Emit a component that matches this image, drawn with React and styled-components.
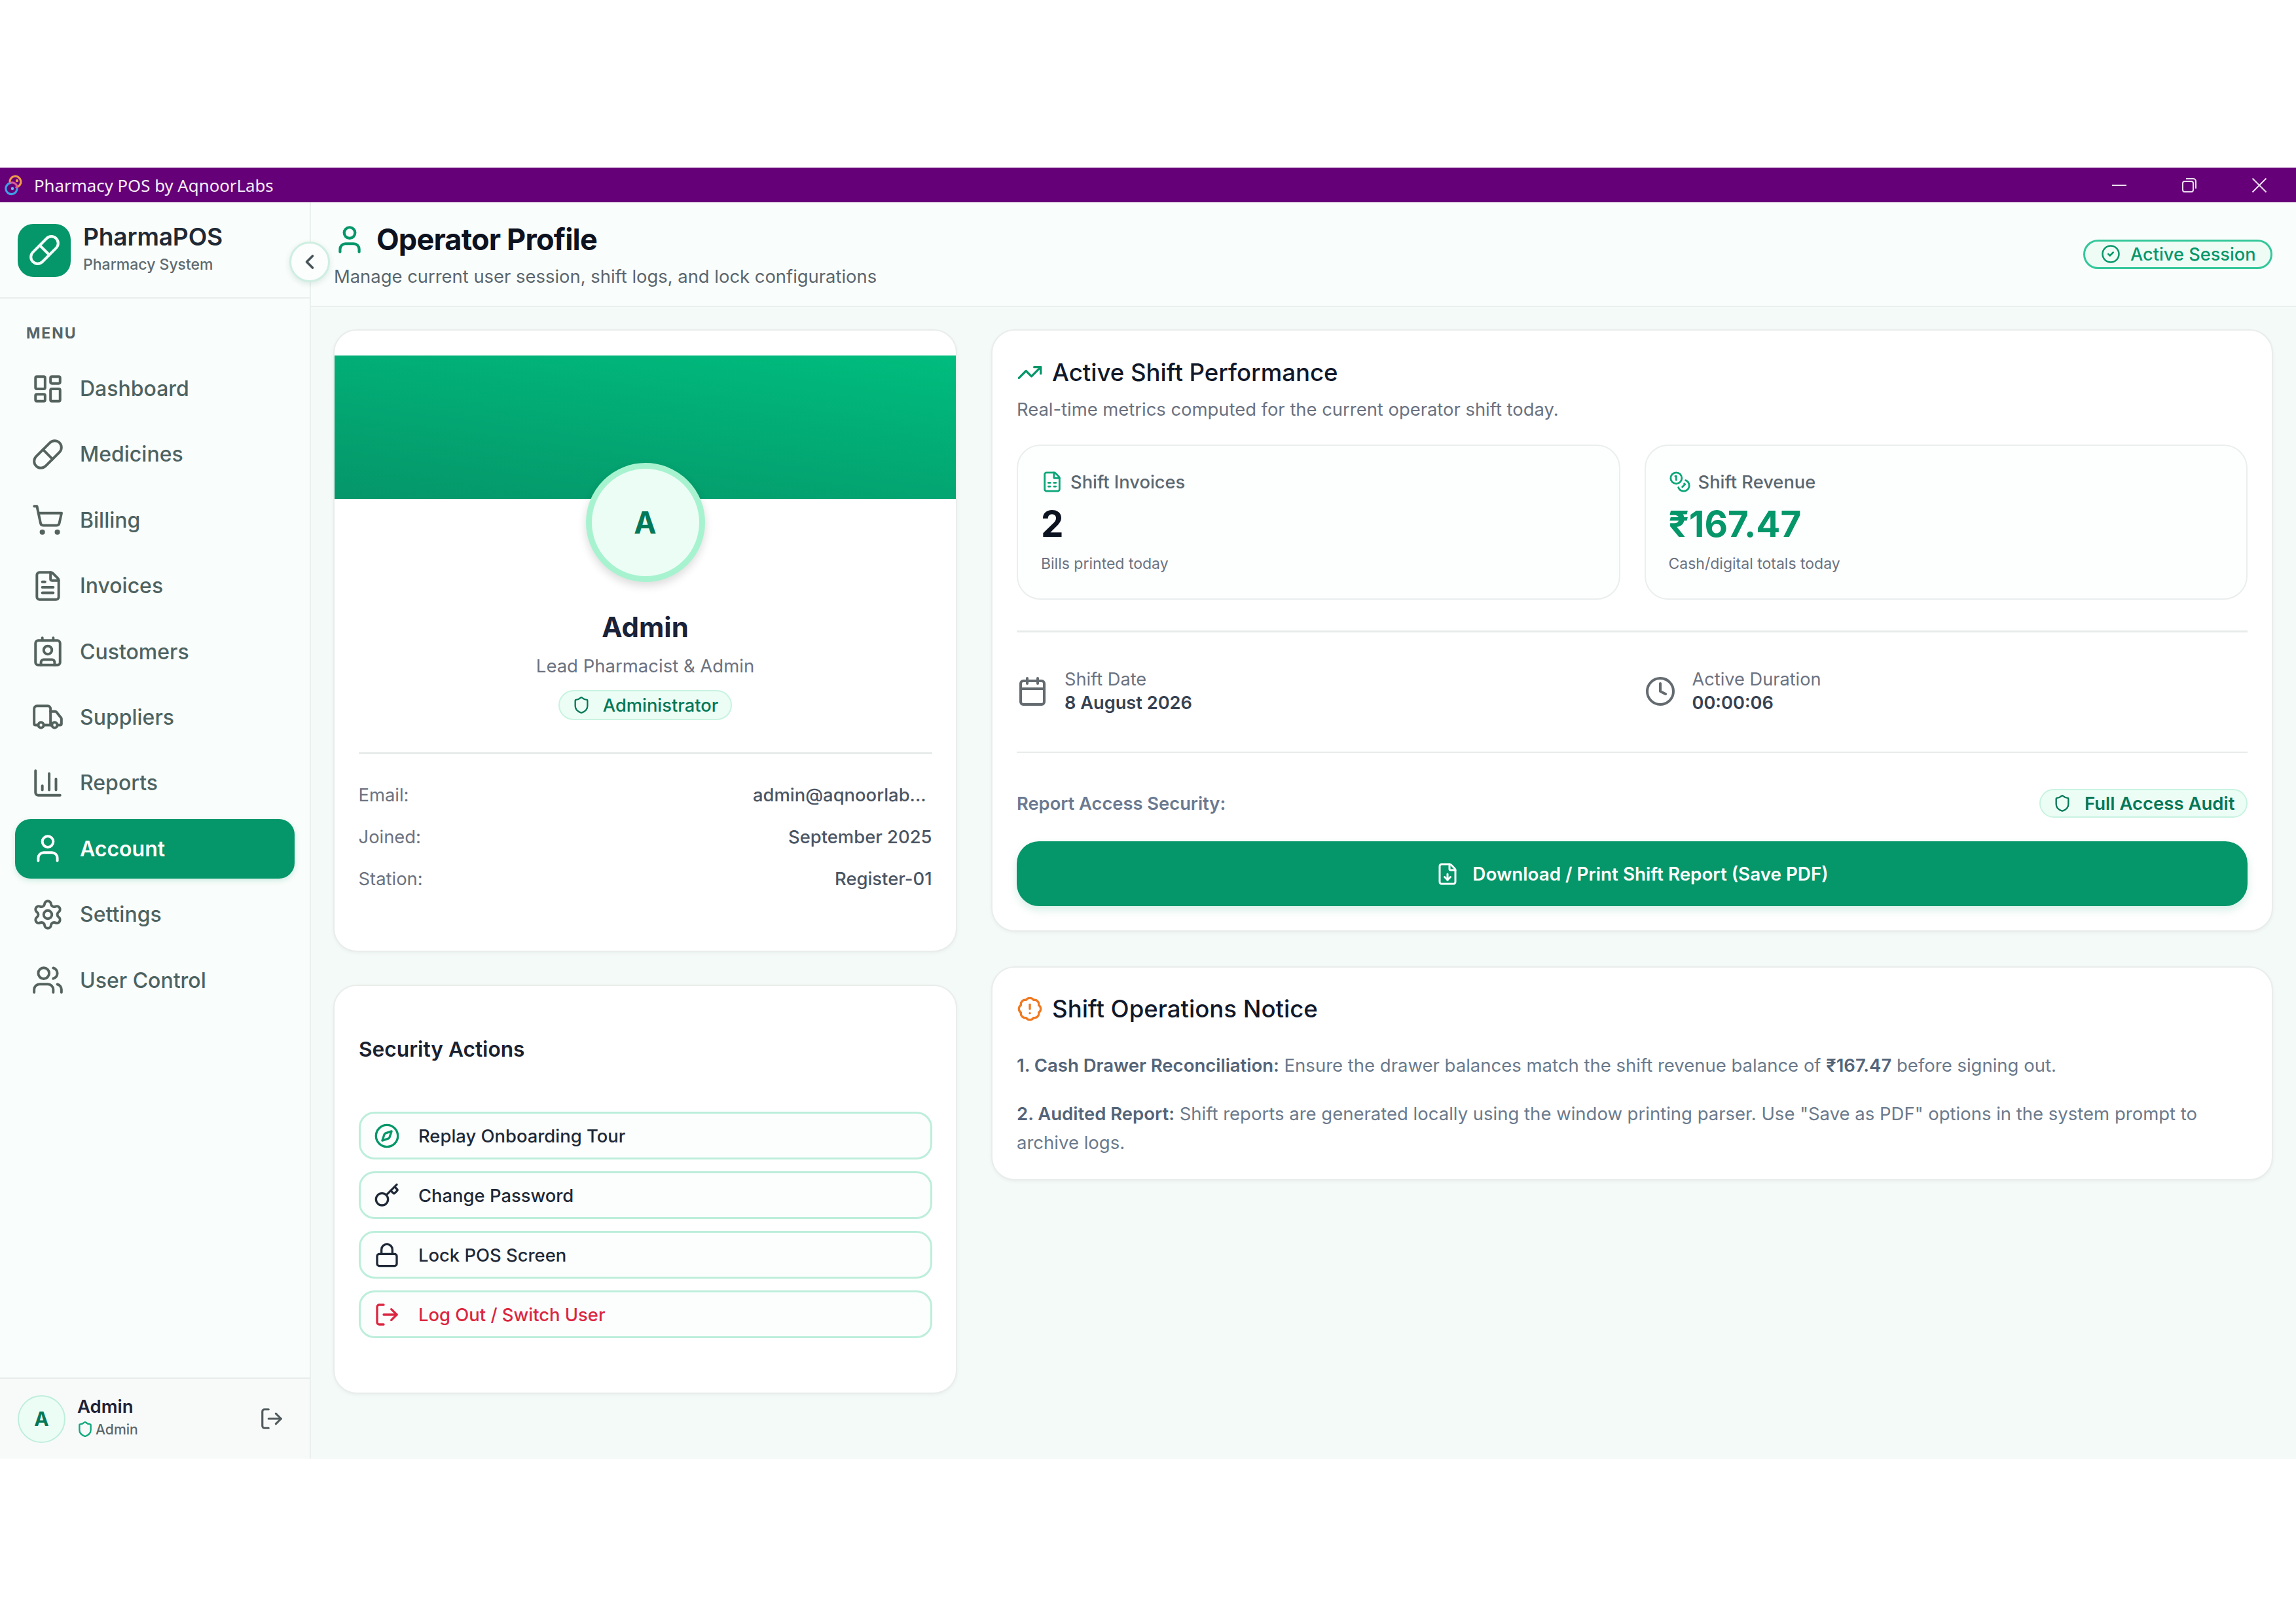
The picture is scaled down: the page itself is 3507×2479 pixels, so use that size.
import React from "react";
import styled, { createGlobalStyle } from "styled-components";
import {
  LayoutDashboard, Pill, ShoppingCart, FileText, Contact, Truck, ChartColumn, User, Settings, Users,
  ChevronLeft, LogOut, CircleCheck, Shield, TrendingUp, FileSpreadsheet, Coins, Calendar, Clock,
  FileDown, Compass, Key, Lock, BadgeAlert,
} from "lucide-react";

const Global = createGlobalStyle`
  html, body { margin: 0; padding: 0; background: #fff; }
  * { box-sizing: border-box; }
  body { font-family: Inter, "Noto Sans", "Liberation Sans", sans-serif; -webkit-font-smoothing: antialiased; }
`;

const Page = styled.div`
  width: 3507px; height: 2479px; padding-top: 256px; background: #fff;
`;
const Window = styled.div`
  height: 1972px; display: flex; flex-direction: column; background: #f4faf7;
`;
const TitleBar = styled.header`
  height: 53px; flex: none; display: flex; align-items: center; background: #660078; padding: 0 3px 0 7px; color: #fff;
`;
const TitleText = styled.span`
  margin-left: 15px; font-family: "Noto Sans", Inter, sans-serif; font-size: 25.8px; flex: 1; color: #f7eefa;
`;
const WinButton = styled.span`
  width: 107px; display: flex; align-items: center; justify-content: center; color: #ece0f0;
`;
const Body = styled.div`
  flex: 1; display: flex; min-height: 0;
`;
const Sidebar = styled.aside`
  width: 475px; flex: none; position: relative; display: flex; flex-direction: column;
  background: #f9fdfb; border-right: 2px solid #eaf0ed;
`;
const Brand = styled.div`
  height: 147px; flex: none; display: flex; align-items: center; gap: 19px; padding: 0 0 0 27px; border-bottom: 2px solid #eaeeec;
`;
const BrandMark = styled.div`
  width: 81px; height: 81px; border-radius: 24px; background: #059669; color: #f2fff9;
  display: flex; align-items: center; justify-content: center; margin-top: 1px;
`;
const BrandText = styled.div`
  display: flex; flex-direction: column; gap: 4px; margin-top: -6px;
`;
const BrandName = styled.div`
  font-size: 37.2px; font-weight: 600; line-height: 46px; color: #1f2a37; letter-spacing: -0.2px;
`;
const BrandSub = styled.div`
  font-size: 23px; font-weight: 500; line-height: 30px; color: #5f6b70;
`;
const CollapseButton = styled.button`
  position: absolute; right: -31px; top: 60px; width: 62px; height: 62px; border-radius: 50%; padding: 0;
  background: #fbfefd; border: 3px solid #cfeee2; color: #46545a; display: flex; align-items: center; justify-content: center;
  box-shadow: 0 3px 8px rgba(16, 90, 70, 0.12); z-index: 3;
`;
const MenuLabel = styled.div`
  margin: 38px 0 24px 40px; font-size: 23px; line-height: 30px; font-weight: 700; letter-spacing: 1.9px; color: #56656a;
`;
const Nav = styled.nav`
  display: flex; flex-direction: column; gap: 9.4px; padding: 0 23px;
`;
const NavItem = styled.div`
  height: 91px; display: flex; align-items: center; gap: 24px; padding-left: 25px; border-radius: 24px;
  font-size: 32px; font-weight: ${(p) => (p.$active ? 600 : 500)};
  color: ${(p) => (p.$active ? "#fff" : "#4e6362")};
  background: ${(p) => (p.$active ? "#059669" : "transparent")};
  box-shadow: ${(p) => (p.$active ? "0 3px 8px rgba(5,150,105,0.18)" : "none")};
  svg { color: ${(p) => (p.$active ? "#fff" : "#55635f")}; flex: none; }
`;
const SideFooter = styled.div`
  margin-top: auto; height: 124px; flex: none; display: flex; align-items: center; padding: 0 39px 0 27px;
  background: #f7faf9; border-top: 2px solid #e8edeb;
`;
const SmallAvatar = styled.div`
  width: 73px; height: 73px; border-radius: 50%; background: #ecfdf5; border: 2px solid #bfeedd;
  display: flex; align-items: center; justify-content: center; font-size: 30px; font-weight: 700; color: #047857;
`;
const FootText = styled.div`
  margin: -6px 0 0 18px; flex: 1; display: flex; flex-direction: column; gap: 2px;
`;
const FootName = styled.div`
  font-size: 27.5px; line-height: 36px; font-weight: 600; color: #1e2238;
`;
const FootRole = styled.div`
  display: flex; align-items: center; gap: 3px; font-size: 21.2px; line-height: 30px; font-weight: 500; color: #5c676c;
  svg { color: #10a97d; margin-left: -1px; }
`;
const FootLogout = styled.span`
  color: #525c5f; display: flex;
`;
const Main = styled.main`
  flex: 1; min-width: 0; display: flex; flex-direction: column;
`;
const TopBar = styled.div`
  height: 160px; flex: none; display: flex; align-items: center; justify-content: space-between; padding: 0 36px 0 34px;
  background: #f9fdfb; border-bottom: 2px solid #e9efec;
`;
const Heading = styled.div`
  display: flex; flex-direction: column; gap: 8px; padding-top: 4px;
`;
const HeadingRow = styled.div`
  display: flex; align-items: center; gap: 16px; svg { color: #059669; }
`;
const PageTitle = styled.h1`
  margin: 0; font-size: 45px; line-height: 56px; font-weight: 700; letter-spacing: -0.8px; color: #0d1220;
`;
const PageSub = styled.p`
  margin: 0 0 0 1px; font-size: 27.4px; line-height: 40px; color: #5b666e;
`;
const SessionPill = styled.div`
  height: 45px; width: 289px; display: flex; align-items: center; gap: 15px; padding-left: 24px; border-radius: 23px;
  border: 3px solid #34c79a; background: #effcf6; color: #079669; font-size: 27.2px; font-weight: 500;
`;
const Content = styled.div`
  flex: 1; min-height: 0; display: grid; grid-template-columns: 953px 1958px; column-gap: 52px; padding: 34px 0 0 34px; align-items: start;
`;
const Column = styled.div`
  display: flex; flex-direction: column;
  gap: ${(p) => p.$gap}px;
`;
const Card = styled.section`
  background: #fff; border: 2px solid #e9edeb; border-radius: 36px; box-shadow: 0 2px 5px rgba(20, 60, 50, 0.05); overflow: hidden;
`;
const ProfileCard = styled(Card)`
  height: 951px; padding-top: 38px; display: flex; flex-direction: column; align-items: center;
`;
const Banner = styled.div`
  width: 100%; height: 219px; flex: none; background: linear-gradient(188deg, #00bd7e 0%, #059669 100%);
`;
const BigAvatar = styled.div`
  width: 182px; height: 182px; margin-top: -55px; flex: none; border-radius: 50%; background: #ecfdf5; border: 9px solid #a7f3d0;
  display: flex; align-items: center; justify-content: center; font-size: 46px; font-weight: 700; color: #047857;
  box-shadow: 0 6px 14px rgba(0, 0, 0, 0.14);
`;
const ProfileName = styled.h2`
  margin: 44px 0 0; font-size: 42px; line-height: 50px; font-weight: 700; color: #1a2238;
`;
const ProfileRole = styled.div`
  margin-top: 14px; font-size: 27.5px; line-height: 40px; color: #6b7280;
`;
const RoleBadge = styled.div`
  margin-top: 17px; height: 46px; display: inline-flex; align-items: center; gap: 19px; padding: 0 19px 0 19px;
  border-radius: 23px; background: #ecfdf5; border: 2px solid #c8f3e1; color: #047857; font-size: 27.3px; font-weight: 500;
`;
const FullDivider = styled.hr`
  width: ${(p) => p.$w || "100%"}; margin: ${(p) => p.$m || "0"}; border: 0; height: ${(p) => p.$h || 3}px; background: #e7ebea; flex: none;
`;
const InfoRows = styled.div`
  width: 876px; margin-top: 42px; display: flex; flex-direction: column; gap: 24px;
`;
const InfoRow = styled.div`
  height: 40px; display: flex; align-items: center; justify-content: space-between; font-size: 27.4px;
`;
const InfoLabel = styled.span`
  color: #6b7280;
`;
const InfoValue = styled.span`
  color: #4b5563; font-weight: 500; margin-right: ${(p) => p.$inset || 0}px;
`;
const SecurityCard = styled(Card)`
  height: 625px; padding: 75px 36px 0 37px;
`;
const CardTitle = styled.h3`
  margin: 0; font-size: 31.7px; line-height: 44px; font-weight: 600; color: #1a2230;
`;
const ActionList = styled.div`
  margin-top: 73px; display: flex; flex-direction: column; gap: 18px;
`;
const Action = styled.div`
  height: 73px; display: flex; align-items: center; gap: 28px; padding-left: 20px; border-radius: 24px;
  border: 3px solid #bdeedb; background: #fbfefd; font-size: 27.4px; font-weight: 500;
  color: ${(p) => (p.$danger ? "#dc2640" : "#1f2937")};
  svg { color: ${(p) => p.$icon || "currentColor"}; flex: none; }
`;
const ShiftCard = styled(Card)`
  height: 920px; padding: 39px 37px 0;
`;
const SectionHead = styled.div`
  height: 50px; display: flex; align-items: center; gap: 14px; font-size: 36.6px; font-weight: 500; color: #11182a;
  svg { color: ${(p) => p.$icon}; flex: none; }
`;
const SectionSub = styled.p`
  margin: 11px 0 0; font-size: 27.4px; line-height: 40px; color: #6b7280;
`;
const StatGrid = styled.div`
  margin-top: 34px; display: grid; grid-template-columns: 1fr 1fr; column-gap: 37px;
`;
const StatCard = styled.div`
  height: 237px; padding: 37px 35px 0; border: 2px solid #eaeeed; border-radius: 36px; background: #fdfefe;
`;
const StatHead = styled.div`
  height: 36px; display: flex; align-items: center; gap: 11px; font-size: 27.3px; font-weight: 500; color: #5b6770;
  svg { color: #0ba678; flex: none; }
`;
const StatValue = styled.div`
  margin-top: 11px; font-size: 54.8px; line-height: 70px; font-weight: 700; color: ${(p) => p.$color};
`;
const StatNote = styled.div`
  margin-top: 8px; font-size: 23px; line-height: 36px; color: #6b7280;
`;
const MetaGrid = styled.div`
  margin-top: 54px; height: 72px; display: grid; grid-template-columns: 1fr 1fr; column-gap: 37px;
`;
const Meta = styled.div`
  display: flex; align-items: center; gap: 25px;
  svg { color: #646b70; flex: none; }
`;
const MetaText = styled.div`
  display: flex; flex-direction: column;
`;
const MetaLabel = styled.div`
  font-size: 27.2px; line-height: 36px; color: #6b7280;
`;
const MetaValue = styled.div`
  font-size: 27.2px; line-height: 36px; font-weight: 600; color: #374151;
`;
const AccessRow = styled.div`
  margin-top: 54px; height: 46px; display: flex; align-items: center; justify-content: space-between;
`;
const AccessLabel = styled.span`
  font-size: 27.3px; font-weight: 600; color: #6b7a90;
`;
const AccessBadge = styled.div`
  width: 318px; height: 44px; display: flex; align-items: center; gap: 20px; padding-left: 19px; border-radius: 22px;
  background: #ecfdf5; border: 2px solid #c8f3e1; color: #047857; font-size: 27.5px; font-weight: 600;
`;
const DownloadButton = styled.button`
  margin-top: 35px; width: 100%; height: 99px; border: 0; border-radius: 34px; background: #059669; color: #fff;
  display: flex; align-items: center; justify-content: center; gap: 20px;
  font-family: inherit; font-size: 27.8px; font-weight: 600; box-shadow: 0 6px 14px rgba(5, 150, 105, 0.16);
`;
const NoticeCard = styled(Card)`
  height: 327px; padding: 38px 37px 0;
`;
const NoticeText = styled.p`
  margin: ${(p) => p.$top}px 0 0; font-size: 27.5px; line-height: 44px; color: #6b7a8c;
  strong { font-weight: 600; color: #546478; }
`;

const navItems = [
  ["Dashboard", LayoutDashboard],
  ["Medicines", Pill],
  ["Billing", ShoppingCart],
  ["Invoices", FileText],
  ["Customers", Contact],
  ["Suppliers", Truck],
  ["Reports", ChartColumn],
  ["Account", User, true],
  ["Settings", Settings],
  ["User Control", Users],
];

const AppLogo = () => (
  <svg width="30" height="34" viewBox="0 0 30 34" fill="none" strokeWidth="3.2" strokeLinecap="round">
    <path d="M8 13 A8.5 8.5 0 1 1 18 20" stroke="#ef9a4b" />
    <path d="M19 21 A8.6 8.6 0 1 1 9 13.5" stroke="#3f9fe6" />
    <path d="M10 13 C14 12 19 15 19 20" stroke="#d95a9a" />
    <circle cx="19" cy="10" r="2.2" fill="#ef9a4b" />
    <circle cx="12" cy="22" r="2.2" fill="#6fb8f0" />
  </svg>
);
const MinIcon = () => (
  <svg width="24" height="24" viewBox="0 0 24 24" stroke="currentColor" strokeWidth="2"><path d="M1 12h22" /></svg>
);
const RestoreIcon = () => (
  <svg width="24" height="24" viewBox="0 0 24 24" fill="none" stroke="currentColor" strokeWidth="2">
    <rect x="2" y="6" width="16" height="16" rx="3" />
    <path d="M7 2h11a4 4 0 0 1 4 4v11" />
  </svg>
);
const CloseIcon = () => (
  <svg width="24" height="24" viewBox="0 0 24 24" stroke="currentColor" strokeWidth="2"><path d="M1.5 1.5l21 21M22.5 1.5l-21 21" /></svg>
);

export default function App() {
  return (
    <Page>
      <Global />
      <Window>
        <TitleBar>
          <AppLogo />
          <TitleText>Pharmacy POS by AqnoorLabs</TitleText>
          <WinButton><MinIcon /></WinButton>
          <WinButton><RestoreIcon /></WinButton>
          <WinButton><CloseIcon /></WinButton>
        </TitleBar>
        <Body>
          <Sidebar>
            <Brand>
              <BrandMark><Pill size={50} strokeWidth={2} /></BrandMark>
              <BrandText>
                <BrandName>PharmaPOS</BrandName>
                <BrandSub>Pharmacy System</BrandSub>
              </BrandText>
            </Brand>
            <CollapseButton><ChevronLeft size={36} strokeWidth={2.4} /></CollapseButton>
            <MenuLabel>MENU</MenuLabel>
            <Nav>
              {navItems.map(([label, Icon, active]) => (
                <NavItem key={label} $active={active}>
                  <Icon size={50} strokeWidth={1.9} />
                  {label}
                </NavItem>
              ))}
            </Nav>
            <SideFooter>
              <SmallAvatar>A</SmallAvatar>
              <FootText>
                <FootName>Admin</FootName>
                <FootRole><Shield size={26} strokeWidth={2.2} />Admin</FootRole>
              </FootText>
              <FootLogout><LogOut size={38} strokeWidth={2} /></FootLogout>
            </SideFooter>
          </Sidebar>
          <Main>
            <TopBar>
              <Heading>
                <HeadingRow>
                  <User size={50} strokeWidth={2} />
                  <PageTitle>Operator Profile</PageTitle>
                </HeadingRow>
                <PageSub>Manage current user session, shift logs, and lock configurations</PageSub>
              </Heading>
              <SessionPill><CircleCheck size={30} strokeWidth={2} />Active Session</SessionPill>
            </TopBar>
            <Content>
              <Column $gap={50}>
                <ProfileCard>
                  <Banner />
                  <BigAvatar>A</BigAvatar>
                  <ProfileName>Admin</ProfileName>
                  <ProfileRole>Lead Pharmacist &amp; Admin</ProfileRole>
                  <RoleBadge><Shield size={28} strokeWidth={2} />Administrator</RoleBadge>
                  <FullDivider $w="876px" $m="49px 0 0" />
                  <InfoRows>
                    <InfoRow><InfoLabel>Email:</InfoLabel><InfoValue $inset={9}>admin@aqnoorlab...</InfoValue></InfoRow>
                    <InfoRow><InfoLabel>Joined:</InfoLabel><InfoValue>September 2025</InfoValue></InfoRow>
                    <InfoRow><InfoLabel>Station:</InfoLabel><InfoValue>Register-01</InfoValue></InfoRow>
                  </InfoRows>
                </ProfileCard>
                <SecurityCard>
                  <CardTitle>Security Actions</CardTitle>
                  <ActionList>
                    <Action $icon="#059669"><Compass size={40} strokeWidth={2} />Replay Onboarding Tour</Action>
                    <Action><Key size={40} strokeWidth={2} />Change Password</Action>
                    <Action><Lock size={40} strokeWidth={2} />Lock POS Screen</Action>
                    <Action $danger><LogOut size={40} strokeWidth={2} />Log Out / Switch User</Action>
                  </ActionList>
                </SecurityCard>
              </Column>
              <Column $gap={53}>
                <ShiftCard>
                  <SectionHead $icon="#059669"><TrendingUp size={40} strokeWidth={2} />Active Shift Performance</SectionHead>
                  <SectionSub>Real-time metrics computed for the current operator shift today.</SectionSub>
                  <StatGrid>
                    <StatCard>
                      <StatHead><FileSpreadsheet size={34} strokeWidth={2} />Shift Invoices</StatHead>
                      <StatValue $color="#0b1220">2</StatValue>
                      <StatNote>Bills printed today</StatNote>
                    </StatCard>
                    <StatCard>
                      <StatHead><Coins size={34} strokeWidth={2} />Shift Revenue</StatHead>
                      <StatValue $color="#059669">₹167.47</StatValue>
                      <StatNote>Cash/digital totals today</StatNote>
                    </StatCard>
                  </StatGrid>
                  <FullDivider $m="47px 0 0" />
                  <MetaGrid>
                    <Meta>
                      <Calendar size={48} strokeWidth={2} />
                      <MetaText><MetaLabel>Shift Date</MetaLabel><MetaValue>8 August 2026</MetaValue></MetaText>
                    </Meta>
                    <Meta>
                      <Clock size={48} strokeWidth={2} />
                      <MetaText><MetaLabel>Active Duration</MetaLabel><MetaValue>00:00:06</MetaValue></MetaText>
                    </Meta>
                  </MetaGrid>
                  <FullDivider $h={2} $m="56px 0 0" />
                  <AccessRow>
                    <AccessLabel>Report Access Security:</AccessLabel>
                    <AccessBadge><Shield size={28} strokeWidth={2} />Full Access Audit</AccessBadge>
                  </AccessRow>
                  <DownloadButton><FileDown size={36} strokeWidth={2} />Download / Print Shift Report (Save PDF)</DownloadButton>
                </ShiftCard>
                <NoticeCard>
                  <SectionHead $icon="#f07a22"><BadgeAlert size={40} strokeWidth={2} />Shift Operations Notice</SectionHead>
                  <NoticeText $top={39}><strong>1. Cash Drawer Reconciliation:</strong> Ensure the drawer balances match the shift revenue balance of <strong>₹167.47</strong> before signing out.</NoticeText>
                  <NoticeText $top={30}><strong>2. Audited Report:</strong> Shift reports are generated locally using the window printing parser. Use "Save as PDF" options in the system prompt to archive logs.</NoticeText>
                </NoticeCard>
              </Column>
            </Content>
          </Main>
        </Body>
      </Window>
    </Page>
  );
}
